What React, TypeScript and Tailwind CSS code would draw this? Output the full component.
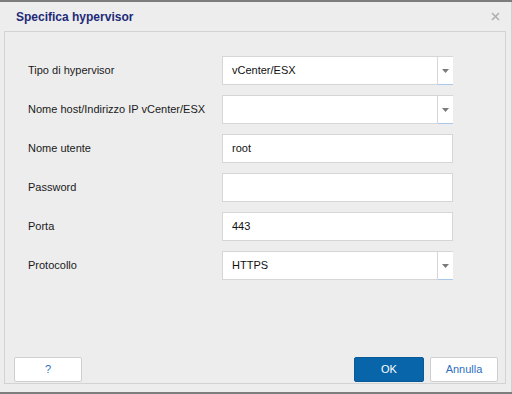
import React from 'react';

const font = { fontFamily: '"Liberation Sans", Arial, sans-serif' };

function Arrow() {
  return (
    <svg width="7" height="4" viewBox="0 0 7 4">
      <path d="M0 0 L7 0 L3.5 4 Z" fill="#7a7a7a" />
    </svg>
  );
}

function TextBox({ value }: { value?: string }) {
  return (
    <div className="w-[231px] h-[29px] bg-white border border-[#d6d6d6] flex items-center pl-[9px] text-[11px] text-[#111]">
      {value}
    </div>
  );
}

function SelectBox({ value }: { value?: string }) {
  return (
    <div className="w-[231px] h-[29px] flex">
      <div className="flex-1 bg-white border border-[#d6d6d6] flex items-center pl-[9px] text-[11px] text-[#111]">
        {value}
      </div>
      <div className="w-[15px] bg-white border-t border-t-[#d6d6d6] border-b border-b-[#a9c9ea] flex items-center justify-center">
        <Arrow />
      </div>
    </div>
  );
}

const rows: { label: string; kind: 'select' | 'text'; value?: string }[] = [
  { label: 'Tipo di hypervisor', kind: 'select', value: 'vCenter/ESX' },
  { label: 'Nome host/Indirizzo IP vCenter/ESX', kind: 'select' },
  { label: 'Nome utente', kind: 'text', value: 'root' },
  { label: 'Password', kind: 'text' },
  { label: 'Porta', kind: 'text', value: '443' },
  { label: 'Protocollo', kind: 'select', value: 'HTTPS' },
];

export default function App() {
  return (
    <div className="w-[512px] h-[394px] bg-[#ededed] border-t-2 border-b-2 border-[#7d7d7d] flex flex-col" style={font}>
      {/* Header */}
      <div className="h-[29px] flex items-center justify-between pl-[16px] pr-[11px] border-r border-r-[#d0d0d0]">
        <span className="text-[12px] font-bold text-[#1e2a78]">Specifica hypervisor</span>
        <svg width="9" height="9" viewBox="0 0 9 9">
          <path d="M1 1 L8 8 M8 1 L1 8" stroke="#b0b0b0" strokeWidth="1.6" />
        </svg>
      </div>

      {/* Body */}
      <div className="flex-1 flex border-r border-r-[#d0d0d0]">
        <div className="ml-[4px] w-[502px] h-[353px] border border-[#d3d3d3] flex flex-col">
          <div className="pt-[24px] pl-[23px] flex flex-col gap-[10px]">
            {rows.map((r) => (
              <div key={r.label} className="flex items-center">
                <div className="w-[194px] text-[11px] text-[#1a1a1a]">{r.label}</div>
                {r.kind === 'select' ? <SelectBox value={r.value} /> : <TextBox value={r.value} />}
              </div>
            ))}
          </div>
          <div className="flex-1" />
          <div className="flex items-center justify-between pl-[9px] pr-[7px] pb-[1px]">
            <button className="w-[68px] h-[25px] bg-white border border-[#cfcfcf] rounded-[2px] text-[11px] text-[#2f6fc0]">
              ?
            </button>
            <div className="flex gap-[6px]">
              <button className="w-[70px] h-[25px] bg-[#0865aa] border border-[#0a5a98] rounded-[2px] text-[11px] text-white">
                OK
              </button>
              <button className="w-[68px] h-[25px] bg-white border border-[#cfcfcf] rounded-[2px] text-[11px] text-[#2f6fc0]">
                Annulla
              </button>
            </div>
          </div>
        </div>
      </div>
    </div>
  );
}
